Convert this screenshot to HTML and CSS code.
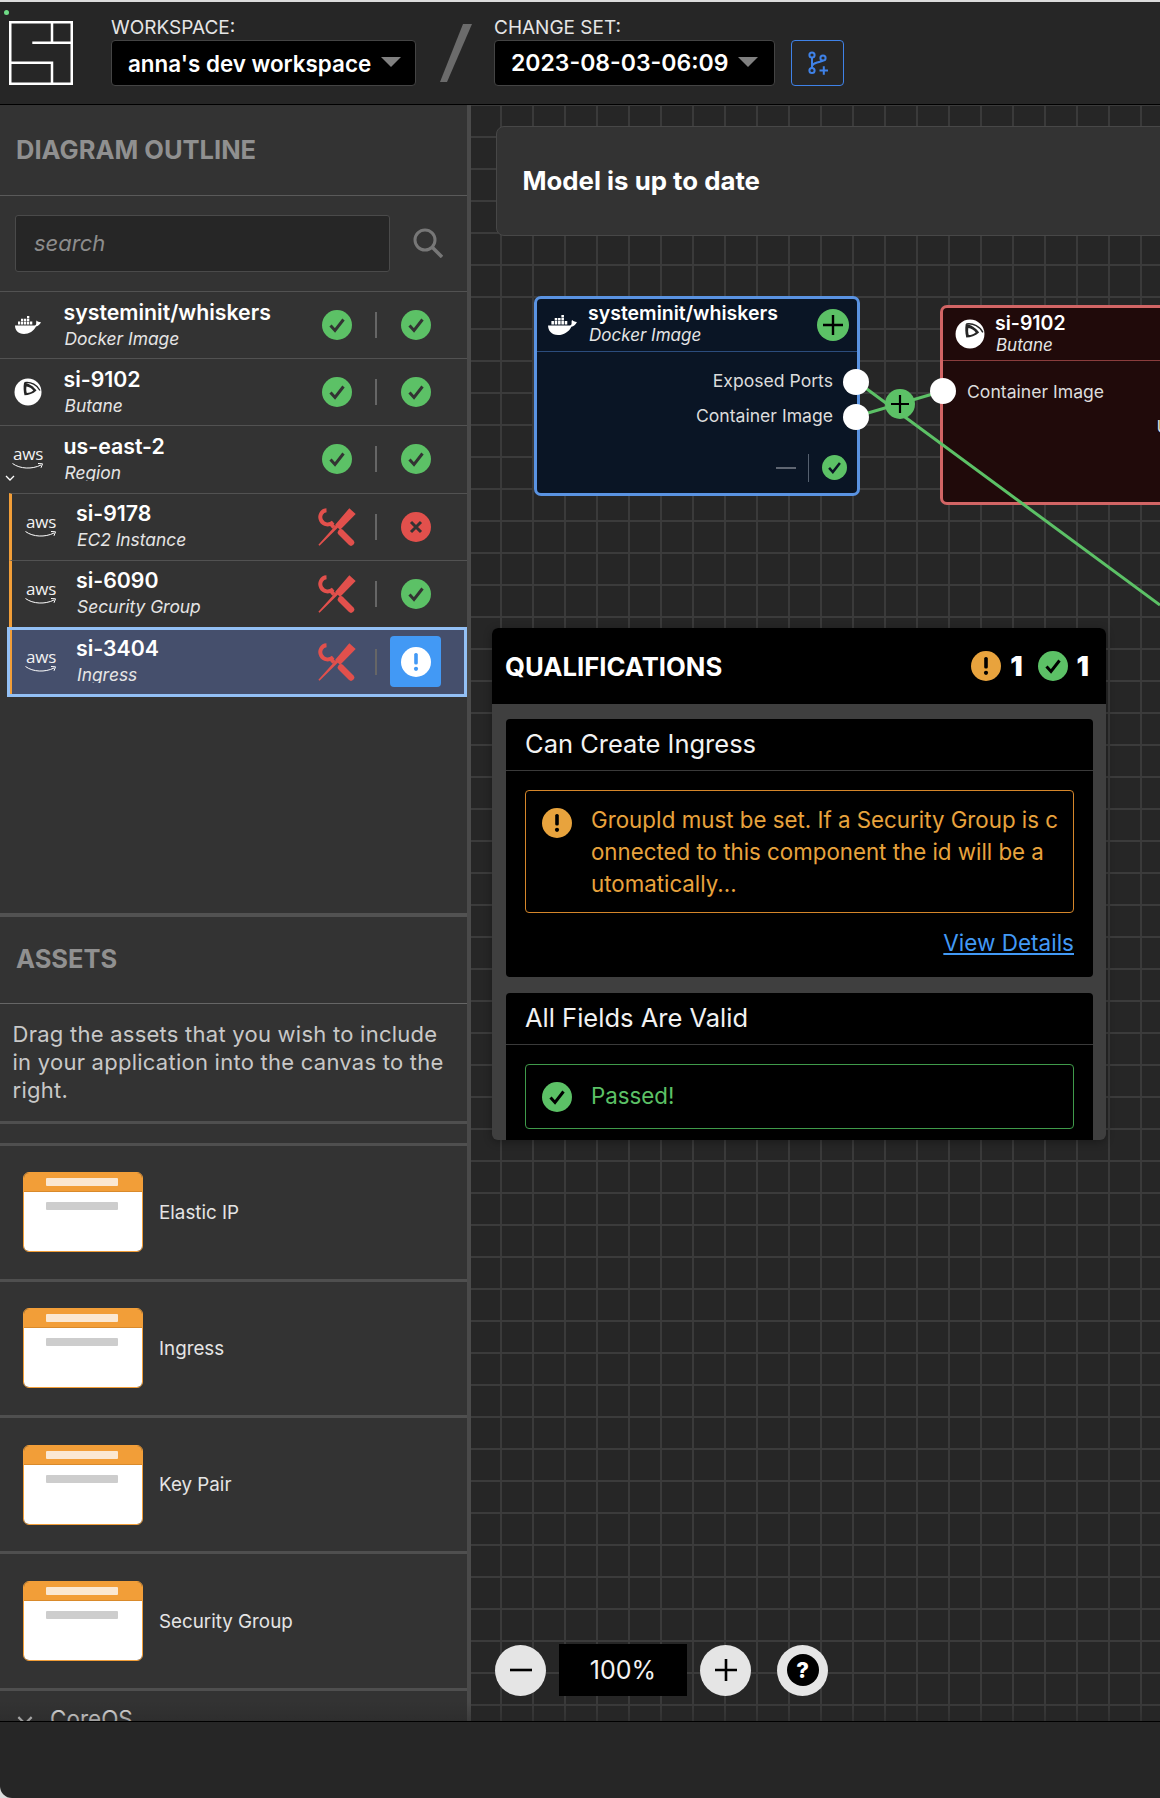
FILE: index.html
```html
<!DOCTYPE html>
<html lang="en">
<head>
<meta charset="utf-8">
<title>System Initiative</title>
<link rel="stylesheet" href="styles.css">
</head>
<body>
<svg class="defs" width="0" height="0" aria-hidden="true">
  <symbol id="i-check" viewBox="0 0 30 30">
    <circle cx="15" cy="15" r="15" fill="#5cc166"/>
    <path d="M8.500 15.500l4.500 5L21.500 9.500" fill="none" stroke="currentColor" stroke-width="3"/>
  </symbol>
  <symbol id="i-x" viewBox="0 0 30 30">
    <circle cx="15" cy="15" r="15" fill="#e2504c"/>
    <path d="M10 10l10 10M20 10L10 20" fill="none" stroke="#333" stroke-width="3"/>
  </symbol>
  <symbol id="i-warn" viewBox="0 0 30 30">
    <circle cx="15" cy="15" r="15" fill="#e8a33d"/>
    <rect x="13.200" y="6" width="3.600" height="11.500" rx="1.600" fill="#000"/>
    <circle cx="15" cy="21.800" r="2.100" fill="#000"/>
  </symbol>
  <symbol id="i-info" viewBox="0 0 30 30">
    <circle cx="15" cy="15" r="15" fill="#fff"/>
    <rect x="13.200" y="6" width="3.600" height="11.500" rx="1.600" fill="#4299f5"/>
    <circle cx="15" cy="21.800" r="2.100" fill="#4299f5"/>
  </symbol>
  <symbol id="i-tools" viewBox="0 0 38 38">
    <path d="M31.300.3l6.400 5.700L22 22l-2.200-2.200L1.500 37.700.4 36.700 17.600 17.600 17 17z" fill="#e2504c"/>
    <path d="M8.500 2.300C3.500 2.500.8 8 3.200 12.500c2.500 4.500 8 5.200 12 1.800" fill="none" stroke="#e2504c" stroke-width="4"/>
    <path d="M12 15l4 4.500" stroke="#e2504c" stroke-width="4" fill="none"/>
    <path d="M23 24.500l10 10" stroke="#e2504c" stroke-width="6.400" stroke-linecap="round" fill="none"/>
  </symbol>
  <symbol id="i-docker" viewBox="0 0 26 18">
    <path d="M0 9.500H19.500C20.800 9.500 21.300 8.300 21.200 7 21.100 6 21.300 4.500 21.800 4.500 22.300 5.500 24 6 26 6.200 25 8.500 23 10 21 10.500 19 15 14 18 9 18 3 18 0 14 0 9.500Z" fill="#fff"/>
    <path d="M3 5.500h2.300v3H3zM6 5.500h2.300v3H6zM9 5.500h2.300v3H9zM12 5.500h2.300v3H12zM15 5.500h2.300v3H15zM6 2.700h2.300v2.300H6zM9 2.700h2.300v2.300H9zM12 2.700h2.300v2.300H12zM12 0h2.300v2.200H12z" fill="#fff"/>
  </symbol>
  <symbol id="i-butane" viewBox="0 0 28 28">
    <circle cx="14" cy="14" r="13.500" fill="#fff"/>
    <path d="M10.500 4.600C17 3.500 23.500 7 26 12.500" fill="none" stroke="#262626" stroke-width="1.300"/>
    <path d="M10 4.700C15 5 20 9 22.500 12.500 19 15.800 14.500 17.200 10.500 17.200 9.500 13 9.300 9 10 4.700Z" fill="#262626"/>
    <path d="M12.500 8.500C15 8.800 17.800 10.500 19.300 12.500 17 14.300 14.800 15 12.800 15 12.200 13 12.100 10.500 12.500 8.500Z" fill="#fff"/>
  </symbol>
  <symbol id="i-swoosh" viewBox="0 0 32 8">
    <path d="M.5 1.500C8 7 20 7.500 29 3" fill="none" stroke="#fff" stroke-width="1"/>
    <path d="M26 1.500l4.500.3-1.500 4" fill="none" stroke="#fff" stroke-width="1"/>
  </symbol>
</svg>

<div class="window">
  <header class="topbar">
    <svg class="logo" viewBox="0 0 64 64" aria-label="System Initiative">
      <path d="M1.250 1.250h61.500v61.500H1.250zM43 1.250V21.700M23.300 21.700H62.750M1.250 41.800H43V62.750" fill="none" stroke="#fff" stroke-width="2.500"/>
    </svg>
    <span class="live-dot"></span>
    <div class="picker picker-ws">
      <div class="picker-label">WORKSPACE:</div>
      <div class="select"><span>anna's dev workspace</span><i class="caret"></i></div>
    </div>
    <svg class="slash" viewBox="0 0 32 58" aria-hidden="true"><path d="M23 0h9L7 58H0z" fill="#6b6b6b"/></svg>
    <div class="picker picker-cs">
      <div class="picker-label">CHANGE SET:</div>
      <div class="select"><span>2023-08-03-06:09</span><i class="caret"></i></div>
    </div>
    <button class="branch-btn" type="button" aria-label="New change set">
      <svg viewBox="0 0 28 28" width="28" height="28">
        <g fill="none" stroke="#3f82e8" stroke-width="2">
          <circle cx="8" cy="6" r="2.600"/><circle cx="19" cy="9" r="2.600"/><circle cx="8" cy="21.500" r="2.600"/>
          <path d="M8 8.600v10.300M8 17c1-3 4-3 7-4 2-.6 3.500-1 4-1.400M15.500 21.500h8.500M19.800 17.300v8.500"/>
        </g>
      </svg>
    </button>
  </header>

  <main class="main">
    <aside class="sidebar">
      <section class="outline">
        <h2 class="panel-title">DIAGRAM OUTLINE</h2>
        <div class="search">
          <div class="search-input">search</div>
          <svg class="search-icon" viewBox="0 0 30 30"><circle cx="12" cy="12" r="10" fill="none" stroke="#777" stroke-width="3"/><path d="M19 19l10 10" stroke="#777" stroke-width="3.500"/></svg>
        </div>

        <div class="row">
          <div class="row-icon"><svg class="ic-docker"><use href="#i-docker"/></svg></div>
          <div class="row-text"><div class="row-name">systeminit/whiskers</div><div class="row-sub">Docker Image</div></div>
          <div class="cell"><svg class="st"><use href="#i-check"/></svg></div><i class="sep"></i>
          <div class="cell"><svg class="st"><use href="#i-check"/></svg></div>
        </div>
        <div class="row">
          <div class="row-icon"><svg class="ic-butane"><use href="#i-butane"/></svg></div>
          <div class="row-text"><div class="row-name">si-9102</div><div class="row-sub">Butane</div></div>
          <div class="cell"><svg class="st"><use href="#i-check"/></svg></div><i class="sep"></i>
          <div class="cell"><svg class="st"><use href="#i-check"/></svg></div>
        </div>
        <div class="row">
          <div class="row-icon">
            <span class="aws"><span class="aws-word">aws</span><svg class="aws-swoosh"><use href="#i-swoosh"/></svg></span>
            <svg class="row-chevron" viewBox="0 0 10 6"><path d="M1 1l4 4 4-4" fill="none" stroke="#fff" stroke-width="1.300"/></svg>
          </div>
          <div class="row-text"><div class="row-name">us-east-2</div><div class="row-sub row-sub-clip">Region</div></div>
          <div class="cell"><svg class="st"><use href="#i-check"/></svg></div><i class="sep"></i>
          <div class="cell"><svg class="st"><use href="#i-check"/></svg></div>
        </div>
        <div class="row row-child">
          <div class="row-icon"><span class="aws"><span class="aws-word">aws</span><svg class="aws-swoosh"><use href="#i-swoosh"/></svg></span></div>
          <div class="row-text"><div class="row-name">si-9178</div><div class="row-sub">EC2 Instance</div></div>
          <div class="cell"><svg class="tools"><use href="#i-tools"/></svg></div><i class="sep"></i>
          <div class="cell"><svg class="st"><use href="#i-x"/></svg></div>
        </div>
        <div class="row row-child">
          <div class="row-icon"><span class="aws"><span class="aws-word">aws</span><svg class="aws-swoosh"><use href="#i-swoosh"/></svg></span></div>
          <div class="row-text"><div class="row-name">si-6090</div><div class="row-sub">Security Group</div></div>
          <div class="cell"><svg class="tools"><use href="#i-tools"/></svg></div><i class="sep"></i>
          <div class="cell"><svg class="st"><use href="#i-check"/></svg></div>
        </div>
        <div class="row row-child row-selected">
          <div class="row-icon"><span class="aws"><span class="aws-word">aws</span><svg class="aws-swoosh"><use href="#i-swoosh"/></svg></span></div>
          <div class="row-text"><div class="row-name">si-3404</div><div class="row-sub row-sub-clip">Ingress</div></div>
          <div class="cell"><svg class="tools"><use href="#i-tools"/></svg></div><i class="sep"></i>
          <div class="cell cell-active"><svg class="st"><use href="#i-info"/></svg></div>
        </div>
      </section>

      <section class="assets">
        <h2 class="panel-title panel-title-assets">ASSETS</h2>
        <p class="assets-help">Drag the assets that you wish to include in your application into the canvas to the right.</p>
        <div class="assets-gap"></div>
        <div class="asset"><div class="asset-card"><div class="asset-head"><i></i></div><div class="asset-body"><i></i></div></div><span>Elastic IP</span></div>
        <div class="asset"><div class="asset-card"><div class="asset-head"><i></i></div><div class="asset-body"><i></i></div></div><span>Ingress</span></div>
        <div class="asset"><div class="asset-card"><div class="asset-head"><i></i></div><div class="asset-body"><i></i></div></div><span>Key Pair</span></div>
        <div class="asset"><div class="asset-card"><div class="asset-head"><i></i></div><div class="asset-body"><i></i></div></div><span>Security Group</span></div>
        <div class="category">
          <svg viewBox="0 0 14 9" width="16" height="10"><path d="M1 1l6 6 6-6" fill="none" stroke="#e5e5e5" stroke-width="2"/></svg>
          <span>CoreOS</span>
        </div>
      </section>
    </aside>

    <section class="canvas">
      <div class="status-panel">Model is up to date</div>

      <article class="node node-blue">
        <div class="node-head">
          <svg class="node-icon-docker"><use href="#i-docker"/></svg>
          <div class="node-title"><div class="node-name">systeminit/whiskers</div><div class="node-sub">Docker Image</div></div>
          <svg class="node-add" viewBox="0 0 32 32"><circle cx="16" cy="16" r="16" fill="#5cc166"/><path d="M16 6v20M6 16h20" stroke="#000" stroke-width="2.400"/></svg>
        </div>
        <div class="node-ports">
          <div class="port">Exposed Ports</div>
          <div class="port">Container Image</div>
        </div>
        <div class="node-foot">
          <i class="dash"></i><i class="foot-sep"></i>
          <svg class="foot-check"><use href="#i-check"/></svg>
        </div>
      </article>

      <article class="node node-red">
        <div class="node-head">
          <svg class="node-icon-butane"><use href="#i-butane"/></svg>
          <div class="node-title"><div class="node-name">si-9102</div><div class="node-sub">Butane</div></div>
        </div>
        <div class="node-ports node-ports-left">
          <div class="port">Container Image</div>
          <div class="port port-out">Users</div>
        </div>
      </article>

      <svg class="edges" viewBox="471 105 689 616" aria-hidden="true">
        <path d="M856 381L1160 605M856 416.500L943 391" stroke="#5cc166" stroke-width="3" fill="none"/>
      </svg>
      <i class="socket socket-a"></i>
      <i class="socket socket-b"></i>
      <i class="socket socket-c"></i>
      <svg class="edge-add" viewBox="0 0 30 30"><circle cx="15" cy="15" r="15" fill="#5cc166"/><path d="M15 6v18M6 15h18" stroke="#000" stroke-width="2.200"/></svg>

      <div class="qual">
        <div class="qual-head">
          <h2 class="qual-title">QUALIFICATIONS</h2>
          <div class="qual-counts">
            <svg class="qc-icon"><use href="#i-warn"/></svg><b>1</b>
            <svg class="qc-icon qc-second"><use href="#i-check"/></svg><b>1</b>
          </div>
        </div>
        <div class="qual-body">
          <div class="qcard">
            <div class="qcard-title">Can Create Ingress</div>
            <div class="qcard-main">
              <div class="qbox qbox-warn">
                <svg class="qbox-icon"><use href="#i-warn"/></svg>
                <div class="qbox-text">GroupId must be set. If a Security Group is c<br>onnected to this component the id will be a<br>utomatically...</div>
              </div>
              <a class="qlink" href="#">View Details</a>
            </div>
          </div>
          <div class="qcard">
            <div class="qcard-title">All Fields Are Valid</div>
            <div class="qcard-main">
              <div class="qbox qbox-ok">
                <svg class="qbox-icon"><use href="#i-check"/></svg>
                <div class="qbox-text">Passed!</div>
              </div>
            </div>
          </div>
        </div>
      </div>

      <div class="zoombar">
        <button class="zoom-btn" type="button" aria-label="Zoom out"><svg viewBox="0 0 24 24" width="24" height="24"><path d="M1 12h22" stroke="#000" stroke-width="2.600"/></svg></button>
        <div class="zoom-value">100%</div>
        <button class="zoom-btn" type="button" aria-label="Zoom in"><svg viewBox="0 0 24 24" width="24" height="24"><path d="M1 12h22M12 1v22" stroke="#000" stroke-width="2.600"/></svg></button>
        <button class="zoom-btn zoom-help" type="button"><span>?</span></button>
      </div>
    </section>
  </main>

  <footer class="footer"></footer>
</div>
</body>
</html>
```

FILE: styles.css
```css
* { box-sizing: border-box; }
html, body { margin: 0; padding: 0; }
body {
  width: 1160px;
  height: 1798px;
  background: #dcdcdc;
  overflow: hidden;
  font-family: Inter, "Noto Sans", "Liberation Sans", sans-serif;
  color: #fff;
}
.defs { position: absolute; }
svg { display: block; }
i { display: block; font-style: normal; }

.window {
  height: 1798px;
  padding-top: 2px;
  display: flex;
  flex-direction: column;
}

/* top bar */
.topbar {
  position: relative;
  flex: 0 0 103px;
  display: flex;
  align-items: flex-start;
  padding: 14px 0 0 9px;
  background: #262626;
  border-bottom: 1px solid #000;
}
.logo { width: 64px; height: 64px; margin-top: 5px; }
.live-dot {
  position: absolute;
  left: 4px;
  top: 8px;
  width: 5px;
  height: 5px;
  border-radius: 50%;
  background: #6fdc86;
}
.picker { display: flex; flex-direction: column; }
.picker-ws { width: 305px; margin-left: 38px; }
.picker-cs { width: 281px; margin-left: 22px; }
.picker-label { height: 24px; padding-top: 1.500px; font-size: 19px; line-height: 20px; color: #e5e5e5; }
.select {
  height: 46px;
  display: flex;
  align-items: center;
  padding-left: 16px;
  background: #000;
  border: 1px solid #444;
  border-radius: 4px;
  font-size: 22.400px;
  font-weight: 600;
}
.picker-cs .select { font-size: 23px; }
.caret {
  margin: 0 0 3px 10px;
  width: 0;
  height: 0;
  border-left: 10px solid transparent;
  border-right: 10px solid transparent;
  border-top: 10px solid #808080;
}
.slash { width: 32px; height: 58px; margin: 8px 0 0 24px; }
.branch-btn {
  width: 53px;
  height: 46px;
  margin: 24px 0 0 16px;
  padding: 0;
  display: flex;
  align-items: center;
  justify-content: center;
  background: transparent;
  border: 1px solid #3f82e8;
  border-radius: 4px;
}

/* main */
.main { position: relative; flex: 1; display: flex; min-height: 0; overflow: hidden; }
.main::after {
  content: "";
  position: absolute;
  left: 0;
  right: 0;
  bottom: 0;
  height: 20px;
  background: linear-gradient(rgba(38,38,38,0), rgba(38,38,38,.4));
  pointer-events: none;
}
.sidebar {
  flex: 0 0 471px;
  display: flex;
  flex-direction: column;
  background: #333;
  border-right: 4px solid #4a4a4a;
  overflow: hidden;
}
.outline { flex: 0 0 812px; border-bottom: 4px solid #525252; }
.panel-title {
  height: 91px;
  margin: 0;
  padding: 0 0 2px 16px;
  display: flex;
  align-items: center;
  font-size: 25.500px;
  font-weight: 700;
  color: #909090;
  border-bottom: 1px solid #5a5a5a;
}
.search {
  height: 95px;
  padding: 19px 24px 0 15px;
  display: flex;
  align-items: flex-start;
  justify-content: space-between;
}
.search-input {
  width: 375px;
  height: 57px;
  padding-left: 18px;
  line-height: 55px;
  background: #262626;
  border: 1px solid #4a4a4a;
  border-radius: 3px;
  font-size: 22px;
  font-style: italic;
  color: #8c8c8c;
}
.search-icon { width: 30px; height: 30px; margin-top: 13px; }

.row {
  position: relative;
  height: 67.200px;
  display: flex;
  align-items: center;
  border-top: 1px solid #525252;
  padding-right: 26px;
}
.row-icon {
  position: relative;
  flex: 0 0 56px;
  display: flex;
  justify-content: center;
  margin-right: 7.500px;
}
.row-text { flex: 1; min-width: 0; }
.row-name { font-size: 21.300px; line-height: 27px; font-weight: 600; }
.row-sub { font-size: 17.400px; line-height: 26px; padding-left: 1px; font-style: italic; color: #e5e5e5; }
.row-sub-clip { height: 21px; margin-bottom: 5px; overflow: hidden; }
.row-child { margin-left: 9px; border-left: 3px solid #f29e38; }
.row-child .row-icon { margin-left: 1px; margin-right: 7px; }
.row-selected { height: 70px; background: #454f6c; border-top: 0; }
.row-selected::after {
  content: "";
  position: absolute;
  left: -5px;
  top: 0;
  right: 0;
  bottom: 0;
  border: 3px solid #93c0f5;
  pointer-events: none;
}
.cell { flex: 0 0 52px; height: 51px; display: flex; align-items: center; justify-content: center; }
.sep { flex: 0 0 2px; height: 26px; margin: 0 12px; background: #666; }
.sep + .cell { flex-basis: 51px; margin-left: 1px; }
.st { width: 30px; height: 30px; color: #333; }
.tools { width: 38px; height: 38px; }
.cell-active { background: #4299f5; border-radius: 4px; }
.ic-docker { width: 26px; height: 18px; }
.ic-butane { width: 28px; height: 28px; }
.aws { display: flex; flex-direction: column; align-items: center; width: 32px; margin-top: -2px; }
.aws-word { font-family: "Open Sans", sans-serif; font-size: 17px; line-height: 15px; letter-spacing: -.2px; color: #f2f2f2; }
.aws-swoosh { width: 32px; height: 8px; margin-top: 1px; }
.row-chevron { position: absolute; left: 5px; top: 27px; width: 10px; height: 6px; }

.assets { flex: 1; min-height: 0; }
.panel-title-assets { height: 87px; padding-bottom: 4px; border-bottom-color: #666; }
.assets-help {
  height: 119.500px;
  margin: 0;
  padding: 16px 18px 0 12.500px;
  font-size: 22px;
  line-height: 28px;
  letter-spacing: .25px;
  color: #c8c8c8;
  border-bottom: 3px solid #4f4f4f;
}
.assets-gap { height: 22px; border-bottom: 3px solid #4f4f4f; }
.asset {
  height: 136.300px;
  padding-left: 23px;
  display: flex;
  align-items: center;
  gap: 16px;
  font-size: 18.800px;
  color: #e5e5e5;
  border-bottom: 3px solid #4f4f4f;
}
.asset-card {
  flex: 0 0 120px;
  height: 80px;
  display: flex;
  flex-direction: column;
  border-radius: 6px;
  overflow: hidden;
  border: 1.500px solid #f29e38;
}
.asset-head { flex: 0 0 19px; padding: 5px 0 0 22px; background: #f29e38; border-bottom: 1px solid #d98a2b; }
.asset-head i { width: 72px; height: 8px; border-radius: 1px; background: #fbe8d2; }
.asset-body { flex: 1; padding: 10px 0 0 22px; background: #fff; }
.asset-body i { width: 72px; height: 8px; border-radius: 1px; background: #cdcdcd; }
.category {
  height: 44px;
  padding: 17px 0 0 17px;
  display: flex;
  align-items: flex-start;
  gap: 17px;
  font-size: 22.500px;
  line-height: 22px;
  color: #f0f0f0;
}
.category svg { margin-top: 8px; }

/* canvas */
.canvas {
  position: relative;
  flex: 1;
  min-width: 0;
  background-color: #262626;
  background-image:
    linear-gradient(#3b3b3b 2px, transparent 2px),
    linear-gradient(90deg, #3a3a3a 2px, transparent 2px);
  background-size: 32px 32px;
  background-position: 0 -1px, 29px 0;
  overflow: hidden;
}
.status-panel {
  position: absolute;
  left: 24.500px;
  top: 20.500px;
  right: -20px;
  height: 110px;
  padding-left: 26px;
  display: flex;
  align-items: center;
  background: #333;
  border: 1px solid #474747;
  border-radius: 8px;
  font-size: 25.800px;
  font-weight: 700;
}

.node { position: absolute; border-radius: 7px; border: 3px solid; display: flex; flex-direction: column; }
.node-blue { left: 63px; top: 191px; width: 326px; height: 200px; background: #0a1525; border-color: #5a93e2; }
.node-red { left: 469px; top: 200px; width: 320px; height: 200px; background: #200a0a; border-color: #d26565; }
.node-head { height: 53px; display: flex; align-items: center; border-bottom: 1px solid; flex: 0 0 auto; }
.node-blue .node-head { border-color: #2b4c7d; padding: 0 8px 0 11px; height: 53px; }
.node-red .node-head { border-color: #8b3d3d; padding: 0 0 0 12px; height: 53px; }
.node-icon-docker { width: 29px; height: 20px; margin-right: 11px; }
.node-icon-butane { width: 30px; height: 30px; margin-right: 10px; }
.node-title { flex: 1; min-width: 0; margin-top: -2px; }
.node-red .node-title { margin-top: 0; }
.node-name { font-size: 19.500px; line-height: 22px; font-weight: 600; }
.node-sub { font-size: 17px; line-height: 22px; padding-left: 1px; font-style: italic; color: #e5e5e5; }
.node-add { width: 32px; height: 32px; flex: none; }
.node-ports { padding: 11px 24px 0 0; text-align: right; font-size: 17.600px; line-height: 35px; color: #dcdcdc; }
.node-ports-left { padding: 13px 0 0 24px; text-align: left; }
.port-out { text-align: right; white-space: nowrap; margin-right: 52px; }
.node-foot { margin-top: auto; height: 44px; padding: 0 10px 7px 0; display: flex; align-items: center; justify-content: flex-end; }
.dash { width: 20px; height: 2px; background: #5f6672; }
.foot-sep { width: 1px; height: 28px; margin: 0 13px 0 12px; background: #55606f; }
.foot-check { width: 25px; height: 25px; color: #0a1525; }

.edges { position: absolute; left: 0; top: 0; width: 689px; height: 616px; pointer-events: none; }
.socket { position: absolute; width: 26px; height: 26px; border-radius: 50%; background: #fff; }
.socket-a { left: 372px; top: 263.500px; }
.socket-b { left: 372px; top: 298.500px; }
.socket-c { left: 459px; top: 273px; }
.edge-add { position: absolute; left: 414px; top: 284px; width: 30px; height: 30px; }

.qual {
  position: absolute;
  left: 21px;
  top: 523px;
  width: 614px;
  height: 511.500px;
  display: flex;
  flex-direction: column;
  border-radius: 6px;
  overflow: hidden;
  background: #3f3f3f;
  box-shadow: 0 2px 8px rgba(0,0,0,.3);
}
.qual-head {
  flex: 0 0 76px;
  display: flex;
  align-items: center;
  justify-content: space-between;
  padding: 0 17px 0 13px;
  background: #000;
}
.qual-title { margin: 0; font-size: 25.700px; font-weight: 700; }
.qual-counts { display: flex; align-items: center; font-size: 27.500px; font-weight: 700; }
.qc-icon { width: 30px; height: 30px; margin-right: 9px; color: #000; }
.qc-second { margin-left: 15px; }
.qual-body { padding: 14.500px 13px 0 14px; display: flex; flex-direction: column; gap: 16px; }
.qcard { background: #000; border-radius: 4px; flex: none; }
.qcard-title {
  height: 52px;
  padding-left: 19px;
  line-height: 50px;
  font-size: 25.500px;
  color: #f2f2f2;
  border-bottom: 1px solid #3a3a3a;
}
.qcard-main { padding: 19px 19px 19px; display: flex; flex-direction: column; }
.qbox { display: flex; padding: 17px 4px 12px 16px; border: 1px solid; border-radius: 4px; }
.qbox-warn { height: 123px; border-color: #d5862a; color: #e8a33d; }
.qbox-ok { height: 65px; border-color: #3f9a4a; color: #5cc166; padding-top: 17px; }
.qbox-icon { flex: 0 0 30px; width: 30px; height: 30px; margin-right: 19px; color: #000; }
.qbox-text { font-size: 22.300px; line-height: 32px; white-space: nowrap; margin-top: -4px; }
.qbox-ok .qbox-text { margin-top: -2px; }
.qlink { align-self: flex-end; margin-top: 15px; font-size: 22.500px; line-height: 30px; color: #4299f5; text-decoration: underline; }

.zoombar { position: absolute; left: 24px; top: 1539px; display: flex; align-items: center; gap: 13px; }
.zoom-btn {
  width: 51px;
  height: 51px;
  padding: 0;
  display: flex;
  align-items: center;
  justify-content: center;
  border: 0;
  border-radius: 50%;
  background: #e5e5e5;
}
.zoom-value {
  width: 128px;
  height: 52px;
  text-align: center;
  line-height: 52px;
  background: #000;
  font-size: 25px;
  color: #f2f2f2;
}
.zoom-help { margin-left: 13px; }
.zoom-help span {
  width: 32px;
  height: 32px;
  border-radius: 50%;
  background: #000;
  color: #fff;
  font: 800 22px/32px Inter, sans-serif;
}

.footer {
  flex: 0 0 77px;
  background: #262626;
  border-top: 1px solid #000;
  border-bottom-left-radius: 12px;
}
```
